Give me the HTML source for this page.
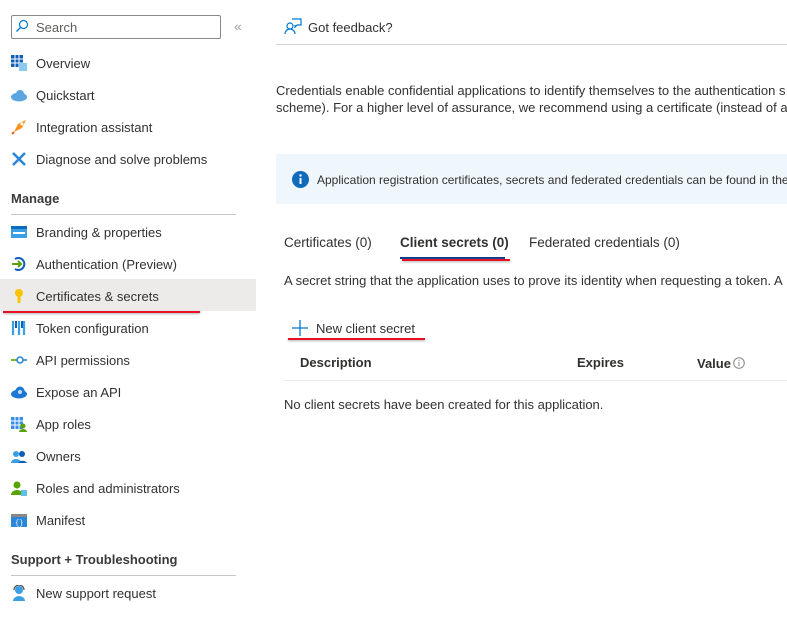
<!DOCTYPE html>
<html><head><meta charset="utf-8"><style>
body{margin:0;width:787px;height:640px;overflow:hidden;background:#fff;font-family:"Liberation Sans",sans-serif;font-size:13px;color:#323130;position:relative}
.a{position:absolute;white-space:nowrap}
.it{position:absolute;left:36px;line-height:16px;margin-top:1px}
.ic{position:absolute;left:11px;width:16px;height:16px}
</style></head><body>
<div class="a" style="left:11px;top:15px;width:208px;height:22px;border:1px solid #8a8886;border-radius:2px"></div>
<svg class="a" style="left:15px;top:19px" width="14" height="14" viewBox="0 0 14 14"><circle cx="8.5" cy="5.5" r="4" fill="none" stroke="#0078d4" stroke-width="1.2"/><path d="M5.5 8.5L1.5 12.5" stroke="#0078d4" stroke-width="1.3"/></svg>
<div class="a" style="left:36px;top:20px;color:#605e5c">Search</div>
<div class="a" style="left:234px;top:18px;color:#a19f9d;font-size:14px">«</div>

<div class="a" style="left:0;top:279px;width:256px;height:32px;background:#edebe9"></div>
<div class="a" style="left:3px;top:311px;width:197px;height:2px;background:#e81123;box-shadow:0 1px 2px #aaa"></div>

<svg class="ic" style="top:55px" viewBox="0 0 16 16"><rect x="0" y="0" width="12" height="12" fill="#0f5fb8"/><path d="M4 0v12M8 0v12M0 4h12M0 8h12" stroke="#fff"/><rect x="8" y="8" width="8" height="8" fill="#8ccbf0"/></svg>
<div class="it" style="top:55px">Overview</div>
<svg class="ic" style="top:87px" viewBox="0 0 16 16"><ellipse cx="8" cy="10" rx="8" ry="4.5" fill="#5ba6df"/><circle cx="9" cy="7" r="4" fill="#5ba6df"/></svg>
<div class="it" style="top:87px">Quickstart</div>
<svg class="ic" style="top:119px" viewBox="0 0 16 16"><path d="M15 1L7 5 3 13 11 9z" fill="#f7941d"/><path d="M3 13L1 15" stroke="#e8611a" stroke-width="2"/><circle cx="11" cy="5" r="1.5" fill="#fff"/></svg>
<div class="it" style="top:119px">Integration assistant</div>
<svg class="ic" style="top:151px" viewBox="0 0 16 16"><path d="M2 2l12 12M14 2L2 14" stroke="#2b88d8" stroke-width="2.6"/></svg>
<div class="it" style="top:151px">Diagnose and solve problems</div>
<div class="a" style="left:11px;top:191px;font-weight:bold;font-size:13px;color:#3b3a39">Manage</div>
<div class="a" style="left:11px;top:214px;width:225px;height:1px;background:#c8c6c4"></div>
<svg class="ic" style="top:224px" viewBox="0 0 16 16"><rect x="0" y="2" width="16" height="12" fill="#3aa0e3"/><rect x="0" y="2" width="16" height="3" fill="#0f6cbd"/><rect x="2" y="8" width="12" height="2" fill="#fff"/></svg>
<div class="it" style="top:224px">Branding &amp; properties</div>
<svg class="ic" style="top:256px" viewBox="0 0 16 16"><path d="M4 3a6 6 0 1 1 0 10" fill="none" stroke="#0f5fb8" stroke-width="2"/><path d="M1 8h9M7 5l3 3-3 3" fill="none" stroke="#57a300" stroke-width="2"/></svg>
<div class="it" style="top:256px">Authentication (Preview)</div>
<svg class="ic" style="top:288px" viewBox="0 0 16 16"><circle cx="8" cy="5" r="4" fill="#f8c300"/><rect x="6.5" y="7" width="3" height="8" fill="#f8c300"/></svg>
<div class="it" style="top:288px">Certificates &amp; secrets</div>
<svg class="ic" style="top:320px" viewBox="0 0 16 16"><path d="M2 1v14M8 1v14M13 1v14" stroke="#3aa0e3" stroke-width="2.2"/><path d="M5 1v7M11 1v7" stroke="#0f5fb8" stroke-width="2"/></svg>
<div class="it" style="top:320px">Token configuration</div>
<svg class="ic" style="top:352px" viewBox="0 0 16 16"><path d="M0 8h6" stroke="#57a300" stroke-width="1.6"/><circle cx="9" cy="8" r="3" fill="none" stroke="#2b88d8" stroke-width="1.6"/><path d="M12 8h4" stroke="#2b88d8" stroke-width="1.6"/></svg>
<div class="it" style="top:352px">API permissions</div>
<svg class="ic" style="top:384px" viewBox="0 0 16 16"><ellipse cx="8" cy="10" rx="8" ry="4.5" fill="#1d78d4"/><circle cx="9" cy="7" r="4.5" fill="#1d78d4"/><circle cx="9" cy="8" r="2" fill="#bfe0f7"/></svg>
<div class="it" style="top:384px">Expose an API</div>
<svg class="ic" style="top:416px" viewBox="0 0 16 16"><rect x="0" y="1" width="12" height="12" fill="#3a8ee6"/><path d="M4 1v12M8 1v12M0 5h12M0 9h12" stroke="#fff"/><circle cx="12" cy="10" r="2.5" fill="#57a300"/><path d="M8 16a4 3 0 0 1 8 0z" fill="#57a300"/></svg>
<div class="it" style="top:416px">App roles</div>
<svg class="ic" style="top:448px" viewBox="0 0 16 16"><circle cx="5" cy="6" r="3" fill="#3aa0e3"/><path d="M0 15a5 4 0 0 1 10 0z" fill="#3aa0e3"/><circle cx="11" cy="6" r="3" fill="#0f5fb8"/><path d="M7 15a5 4 0 0 1 9 0z" fill="#0f5fb8"/></svg>
<div class="it" style="top:448px">Owners</div>
<svg class="ic" style="top:480px" viewBox="0 0 16 16"><circle cx="6" cy="5" r="3.5" fill="#57a300"/><path d="M0 15a6 5 0 0 1 12 0z" fill="#57a300"/><rect x="10" y="10" width="6" height="6" fill="#5fc0e8"/></svg>
<div class="it" style="top:480px">Roles and administrators</div>
<svg class="ic" style="top:512px" viewBox="0 0 16 16"><rect x="0" y="2" width="16" height="13" fill="#2b88d8"/><rect x="0" y="2" width="16" height="3" fill="#8a8886"/><text x="4" y="13" font-size="7" fill="#fff" font-family="Liberation Mono">{}</text></svg>
<div class="it" style="top:512px">Manifest</div>
<div class="a" style="left:11px;top:552px;font-weight:bold;color:#3b3a39">Support + Troubleshooting</div>
<div class="a" style="left:11px;top:575px;width:225px;height:1px;background:#c8c6c4"></div>
<svg class="ic" style="top:585px" viewBox="0 0 16 16"><circle cx="8" cy="5" r="4" fill="#3aa0e3"/><path d="M2 16a6 5 0 0 1 12 0z" fill="#3aa0e3"/><path d="M3 5a5 5 0 0 1 10 0" fill="none" stroke="#505050" stroke-width="1.2"/></svg>
<div class="it" style="top:585px">New support request</div>

<svg class="a" style="left:284px;top:18px" width="18" height="17" viewBox="0 0 18 17"><circle cx="6" cy="8" r="3" fill="none" stroke="#0078d4" stroke-width="1.2"/><path d="M1 16a5 5 0 0 1 10 0" fill="none" stroke="#0078d4" stroke-width="1.2"/><path d="M8 1h9v6h-4l-2 2V7" fill="none" stroke="#0078d4" stroke-width="1.2"/></svg>
<div class="a" style="left:308px;top:20px">Got feedback?</div>
<div class="a" style="left:276px;top:44px;width:511px;height:1px;background:#d2d0ce"></div>
<div class="a" style="left:276px;top:82px;line-height:17px">Credentials enable confidential applications to identify themselves to the authentication s<br>scheme). For a higher level of assurance, we recommend using a certificate (instead of a c</div>
<div class="a" style="left:276px;top:154px;width:511px;height:50px;background:#eff6fc"></div>
<svg class="a" style="left:292px;top:171px" width="17" height="17" viewBox="0 0 17 17"><circle cx="8.5" cy="8.5" r="8.5" fill="#0f6cbd"/><rect x="7.5" y="7" width="2" height="6" fill="#fff"/><circle cx="8.5" cy="4.5" r="1.2" fill="#fff"/></svg>
<div class="a" style="left:317px;top:173px;font-size:12px">Application registration certificates, secrets and federated credentials can be found in the</div>
<div class="a" style="left:284px;top:235px;font-size:13.5px">Certificates (0)</div>
<div class="a" style="left:400px;top:235px;font-size:13.5px;font-weight:bold">Client secrets (0)</div>
<div class="a" style="left:400px;top:257px;width:105px;height:2px;background:#0f3a8c"></div>
<div class="a" style="left:402px;top:259px;width:108px;height:2px;background:#e81123;box-shadow:0 1px 2px #aaa"></div>
<div class="a" style="left:529px;top:235px;font-size:13.5px">Federated credentials (0)</div>
<div class="a" style="left:284px;top:273px">A secret string that the application uses to prove its identity when requesting a token. A</div>
<svg class="a" style="left:292px;top:320px" width="16" height="16" viewBox="0 0 16 16"><path d="M8 0v16M0 8h16" stroke="#0078d4" stroke-width="1.3"/></svg>
<div class="a" style="left:316px;top:321px">New client secret</div>
<div class="a" style="left:288px;top:338px;width:137px;height:2px;background:#e81123;box-shadow:0 1px 2px #aaa"></div>
<div class="a" style="left:300px;top:355px;font-weight:bold">Description</div>
<div class="a" style="left:577px;top:355px;font-weight:bold">Expires</div>
<div class="a" style="left:697px;top:356px;font-weight:bold">Value</div>
<svg class="a" style="left:733px;top:357px" width="12" height="12" viewBox="0 0 12 12"><circle cx="6" cy="6" r="5.3" fill="none" stroke="#8a8886"/><path d="M6 5v4" stroke="#8a8886"/><circle cx="6" cy="3.3" r=".6" fill="#8a8886"/></svg>
<div class="a" style="left:284px;top:380px;width:503px;height:1px;background:#edebe9"></div>
<div class="a" style="left:284px;top:397px">No client secrets have been created for this application.</div>
</body></html>
